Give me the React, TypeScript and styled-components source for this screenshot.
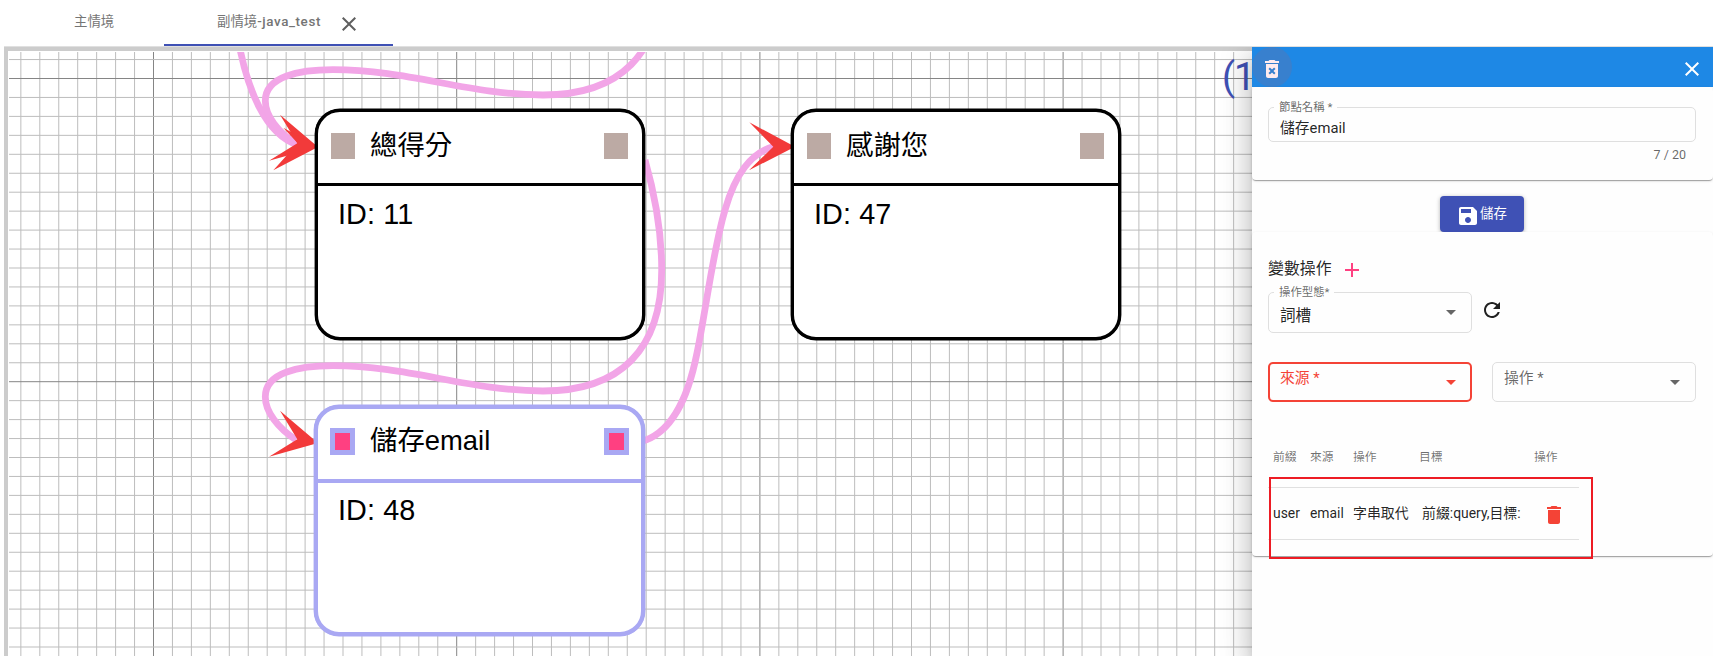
import React from "react";
import styled, { createGlobalStyle } from "styled-components";

const GlobalStyle = createGlobalStyle`
  * { box-sizing: border-box; }
  html, body { margin: 0; padding: 0; background: #fff; }
  body { overflow: hidden; font-family: Roboto, "Noto Sans CJK TC", sans-serif; color: rgba(0, 0, 0, 0.87); }
`;

const Page = styled.div`
  display: flex;
  flex-direction: column;
  height: 656px;
  padding-left: 4px;
`;

const TabBar = styled.nav`
  display: flex;
  flex: 0 0 47px;
  border-bottom: 1px solid #e0e0e0;
`;

const Tab = styled.div<{ $width: number; $indent: number; $active?: boolean }>`
  display: flex;
  align-items: center;
  gap: 16px;
  width: ${(p) => p.$width}px;
  height: 46px;
  padding-left: ${(p) => p.$indent}px;
  border-bottom: 2px solid ${(p) => (p.$active ? "#3f51b5" : "transparent")};
  font-size: 13.4px;
  line-height: 20px;
  white-space: nowrap;
  color: #757575;
  svg { margin-top: 4px; }
`;

const Latin = styled.span`
  font-weight: 500;
  letter-spacing: 0.6px;
`;

const Workspace = styled.main`
  display: flex;
  flex: 1;
  min-height: 0;
  overflow: hidden;
`;

const Canvas = styled.section`
  position: relative;
  flex: 1;
  overflow: hidden;
  padding: 1px 0 0 1px;
  border: solid #ccc;
  border-width: 4px 0 0 4px;
`;

const Drawing = styled.svg`
  display: block;
`;

const NodeBox = styled.article<{ $x: number; $y: number; $selected?: boolean }>`
  --edge: ${(p) => (p.$selected ? "#a9a8f3" : "#000")};
  --line: ${(p) => (p.$selected ? 4 : 3)}px;
  position: absolute;
  left: ${(p) => p.$x}px;
  top: ${(p) => p.$y}px;
  width: ${(p) => (p.$selected ? 331 : 330)}px;
  height: 231px;
  border: var(--line) solid var(--edge);
  border-radius: 25px;
  background: #fff;
  box-shadow: 0 0 0 0.4px var(--edge);
  font-family: "Liberation Sans", "Noto Sans CJK TC", sans-serif;
  color: #000;
`;

const NodeHeader = styled.header<{ $selected?: boolean }>`
  display: flex;
  align-items: flex-start;
  height: 74px;
  padding: ${(p) => (p.$selected ? "19px 12px 0" : "21px 14px 0 13px")};
  border-bottom: var(--line) solid var(--edge);
`;

const Port = styled.i<{ $selected?: boolean }>`
  width: ${(p) => (p.$selected ? 25 : 24)}px;
  height: ${(p) => (p.$selected ? 27 : 26)}px;
  flex: none;
  background: ${(p) => (p.$selected ? "#ff4081" : "#bcaaa4")};
  border: ${(p) => (p.$selected ? "5px solid #a9a8f3" : "none")};
`;

const NodeTitle = styled.h2`
  flex: 1;
  margin: -7px 0 0 15px;
  font-size: 27.4px;
  font-weight: 400;
  line-height: 40px;
  white-space: nowrap;
`;

const NodeId = styled.p<{ $selected?: boolean }>`
  margin: ${(p) => (p.$selected ? 9 : 10)}px 0 0 20px;
  font-size: 28.8px;
  line-height: 36px;
  letter-spacing: 0.1px;
`;

const Panel = styled.aside`
  position: relative;
  display: flex;
  flex-direction: column;
  flex: 0 0 461px;
  background: #fefefe;
  box-shadow: 0 8px 10px -5px rgba(0, 0, 0, 0.2), 0 16px 24px 2px rgba(0, 0, 0, 0.14),
    0 6px 30px 5px rgba(0, 0, 0, 0.12);
`;

const PanelHeader = styled.header`
  display: flex;
  align-items: center;
  justify-content: space-between;
  height: 40px;
  padding-right: 9px;
  background: #1e88e5;
  svg { margin-top: 4px; }
`;

const RoundButton = styled.button`
  display: grid;
  place-items: center;
  width: 40px;
  height: 40px;
  padding: 0;
  border: 0;
  border-radius: 50%;
  background: #3880ce;
`;

const Card = styled.section<{ $height: number; $pad: string }>`
  height: ${(p) => p.$height}px;
  padding: ${(p) => p.$pad};
  border-radius: 4px;
  background: #fefefe;
  box-shadow: 0 2px 1px -1px rgba(0, 0, 0, 0.2), 0 1px 1px 0 rgba(0, 0, 0, 0.14),
    0 1px 3px 0 rgba(0, 0, 0, 0.12);
`;

const Field = styled.fieldset<{ $width: number; $height: number; $error?: boolean }>`
  display: flex;
  align-items: center;
  justify-content: space-between;
  position: relative;
  width: ${(p) => p.$width}px;
  height: ${(p) => p.$height}px;
  margin: 0;
  padding: 0 ${(p) => (p.$error ? 14 : 15)}px 0 ${(p) => (p.$error ? 10 : 11)}px;
  border: ${(p) => (p.$error ? "2px solid #f44336" : "1px solid #dfdfdf")};
  border-radius: 5px;
  color: ${(p) => (p.$error ? "#f44336" : "rgba(0,0,0,.6)")};
`;

const FieldLabel = styled.span`
  position: absolute;
  top: -9px;
  left: 5px;
  padding: 0 5px;
  background: #fefefe;
  font-size: 11.4px;
  line-height: 16px;
  color: rgba(0, 0, 0, 0.6);
  white-space: nowrap;
`;

const FieldValue = styled.span<{ $size: number; $shift: number; $muted?: boolean }>`
  font-size: ${(p) => p.$size}px;
  line-height: 20px;
  margin-top: ${(p) => p.$shift}px;
  color: ${(p) => (p.$muted ? "inherit" : "rgba(0,0,0,.87)")};
`;

const Caret = styled.i<{ $down?: boolean }>`
  width: 0;
  height: 0;
  border: 5px solid transparent;
  border-top-color: currentColor;
  border-bottom: 0;
  margin-top: ${(p) => (p.$down ? 0 : -1)}px;
`;

const Counter = styled.div`
  padding: 6px 10px 0 0;
  font-size: 12.5px;
  line-height: 14px;
  text-align: right;
  color: rgba(0, 0, 0, 0.6);
`;

const SaveRow = styled.div`
  display: flex;
  justify-content: center;
  padding: 16px 1px 0 0;
`;

const SaveButton = styled.button`
  display: flex;
  align-items: center;
  width: 84px;
  height: 36px;
  padding: 0 0 0 16px;
  border: 0;
  border-radius: 4px;
  background: #3f51b5;
  color: #fff;
  font: 400 13.4px/20px Roboto, "Noto Sans CJK TC", sans-serif;
  box-shadow: 0 1px 4px rgba(0, 0, 0, 0.3);
  svg { margin-top: 4px; }
`;

const SectionTitle = styled.h3`
  display: flex;
  align-items: center;
  gap: 8px;
  height: 24px;
  margin: 0 0 10px;
  font-size: 15.9px;
  font-weight: 400;
  span { margin-top: -6px; }
`;

const Row = styled.div<{ $gap: number; $below?: number }>`
  display: flex;
  align-items: flex-start;
  gap: ${(p) => p.$gap}px;
  margin-bottom: ${(p) => p.$below ?? 0}px;
`;

const RefreshIcon = styled.span`
  margin-top: 6px;
  height: 24px;
`;

const OperationTable = styled.div`
  width: 311px;
  margin-top: 36px;
`;

const TableRow = styled.div<{ $head?: boolean }>`
  display: grid;
  grid-template-columns: 37px 43px ${(p) => (p.$head ? "66px 115px" : "69px 112px")} 1fr;
  align-items: center;
  height: ${(p) => (p.$head ? 50 : 52)}px;
  padding: ${(p) => (p.$head ? "0 0 11px 5px" : "0 0 2px 5px")};
  border-bottom: 1px solid #e0e0e0;
  font-size: ${(p) => (p.$head ? 11.8 : 13.9)}px;
  line-height: 20px;
  color: ${(p) => (p.$head ? "rgba(0,0,0,.56)" : "rgba(0,0,0,.87)")};
  white-space: nowrap;
  svg { display: block; margin: 5px 0 0 8px; }
`;

const Highlight = styled.div`
  position: absolute;
  left: 17px;
  top: 430px;
  width: 324px;
  height: 82px;
  border: 2px solid #ed1c24;
`;

const glyphs = {
  close: "M19 6.41L17.59 5 12 10.59 6.41 5 5 6.41 10.59 12 5 17.59 6.41 19 12 13.41 17.59 19 19 17.59 13.41 12z",
  deleteForever:
    "M6 19c0 1.1.9 2 2 2h8c1.1 0 2-.9 2-2V7H6v12zm2.46-7.12l1.41-1.41L12 12.59l2.12-2.12 1.41 1.41L13.41 14l2.12 2.12-1.41 1.41L12 15.41l-2.12 2.12-1.41-1.41L10.59 14l-2.13-2.12zM15.5 4l-1-1h-5l-1 1H5v2h14V4z",
  save: "M17 3H5c-1.11 0-2 .9-2 2v14c0 1.1.89 2 2 2h14c1.1 0 2-.9 2-2V7l-4-4zm-5 16c-1.66 0-3-1.34-3-3s1.34-3 3-3 3 1.34 3 3-1.34 3-3 3zm3-10H5V5h10v4z",
  add: "M19 13h-6v6h-2v-6H5v-2h6V5h2v6h6v2z",
  refresh:
    "M17.65 6.35C16.2 4.9 14.21 4 12 4c-4.42 0-7.99 3.58-7.99 8s3.57 8 7.99 8c3.73 0 6.84-2.55 7.73-6h-2.08c-.82 2.33-3.04 4-5.65 4-3.31 0-6-2.69-6-6s2.69-6 6-6c1.66 0 3.14.69 4.22 1.78L13 11h7V4l-2.35 2.35z",
  delete: "M6 19c0 1.1.9 2 2 2h8c1.1 0 2-.9 2-2V7H6v12zM19 4h-3.5l-1-1h-5l-1 1H5v2h14V4z",
};

function Icon({ name, color }: { name: keyof typeof glyphs; color: string }) {
  return (
    <svg width="24" height="24" viewBox="0 0 24 24" fill={color}>
      <path d={glyphs[name]} />
    </svg>
  );
}

const STEP = 18.95;
const columns = Array.from({ length: 66 }, (_, i) => i - 7);
const rows = Array.from({ length: 32 }, (_, i) => i - 1);
const tone = (i: number) => (i % 16 === 0 ? "#858585" : "#bdbdbd");

const loop =
  "M645 160C655 195 661.7 235 661.7 270C661.7 350 620 391 543 391C470 391 408 365.7 333 365.7C300 365.7 265.3 372 265.3 396.7C265.3 412 278 428 296 440";
const arrow = "M318 443L280 410.7L297.3 439.3L269 456.7Z";

function Diagram() {
  return (
    <Drawing width="1243" height="604" viewBox="9 52 1243 604">
      <g strokeWidth="1">
        {columns.map((i) => (
          <line key={i} x1={153.5 + i * STEP} x2={153.5 + i * STEP} y1="52" y2="656" stroke={tone(i)} />
        ))}
        {rows.map((i) => (
          <line key={i} x1="9" x2="1252" y1={78.5 + i * STEP} y2={78.5 + i * STEP} stroke={tone(i)} />
        ))}
      </g>
      <g fill="none" stroke="#f2a5e7" strokeWidth="6.8">
        <path d="M239 44C247 86 264 134 298 145" />
        <path d={loop} transform="translate(0 -296)" />
        <path d={loop} />
        <path d="M640 442C672 434 688 398 697 353C706 310 713 250 725 210C735 175 750 153 775 146" />
      </g>
      <g fill="#f23a3a">
        <path d={arrow} transform="translate(0 -296)" />
        <path d="M318 147L283.3 127.7L297.7 143.3L273.3 170.3Z" />
        <path d={arrow} />
        <path d="M795 146.7L749.3 122.3L773.3 146.7L749 170.3Z" />
      </g>
      <text x="1222" y="89.5" fill="#3f51b5" fontFamily="Roboto, sans-serif" fontSize="38" letterSpacing="-1">
        (1
      </text>
    </Drawing>
  );
}

type NodeProps = { x: number; y: number; title: string; id: number; selected?: boolean };

function FlowNode({ x, y, title, id, selected }: NodeProps) {
  return (
    <NodeBox $x={x} $y={y} $selected={selected}>
      <NodeHeader $selected={selected}>
        <Port $selected={selected} />
        <NodeTitle>{title}</NodeTitle>
        <Port $selected={selected} />
      </NodeHeader>
      <NodeId $selected={selected}>ID: {id}</NodeId>
    </NodeBox>
  );
}

export default function App() {
  return (
    <>
      <GlobalStyle />
      <Page>
        <TabBar>
          <Tab $width={160} $indent={70}>
            <span>主情境</span>
          </Tab>
          <Tab $width={229} $indent={53} $active>
            <span>
              副情境<Latin>-java_test</Latin>
            </span>
            <Icon name="close" color="#5f5f5f" />
          </Tab>
        </TabBar>
        <Workspace>
          <Canvas>
            <Diagram />
            <FlowNode x={307} y={58} title="總得分" id={11} />
            <FlowNode x={783} y={58} title="感謝您" id={47} />
            <FlowNode x={306} y={354} title="儲存email" id={48} selected />
          </Canvas>
          <Panel>
            <PanelHeader>
              <RoundButton>
                <Icon name="deleteForever" color="#ffebee" />
              </RoundButton>
              <Icon name="close" color="#fff" />
            </PanelHeader>
            <Card $height={93} $pad="20px 17px 0 16px">
              <Field $width={428} $height={35}>
                <FieldLabel>節點名稱 *</FieldLabel>
                <FieldValue $size={14.8} $shift={6}>
                  儲存email
                </FieldValue>
              </Field>
              <Counter>7 / 20</Counter>
            </Card>
            <SaveRow>
              <SaveButton>
                <Icon name="save" color="#fff" />
                <span>儲存</span>
              </SaveButton>
            </SaveRow>
            <Card $height={324} $pad="26px 17px 0 16px">
              <SectionTitle>
                <span>變數操作</span>
                <Icon name="add" color="#ff4081" />
              </SectionTitle>
              <Row $gap={8} $below={29}>
                <Field $width={204} $height={41}>
                  <FieldLabel>操作型態*</FieldLabel>
                  <FieldValue $size={15.6} $shift={6}>
                    詞槽
                  </FieldValue>
                  <Caret />
                </Field>
                <RefreshIcon>
                  <Icon name="refresh" color="#212121" />
                </RefreshIcon>
              </Row>
              <Row $gap={20}>
                <Field $width={204} $height={40} $error>
                  <FieldValue $size={14.8} $shift={-8} $muted>
                    來源 *
                  </FieldValue>
                  <Caret $down />
                </Field>
                <Field $width={204} $height={40}>
                  <FieldValue $size={14.8} $shift={-8} $muted>
                    操作 *
                  </FieldValue>
                  <Caret $down />
                </Field>
              </Row>
              <OperationTable>
                <TableRow $head>
                  <span>前綴</span>
                  <span>來源</span>
                  <span>操作</span>
                  <span>目標</span>
                  <span>操作</span>
                </TableRow>
                <TableRow>
                  <span>user</span>
                  <span>email</span>
                  <span>字串取代</span>
                  <span>前綴:query,目標:</span>
                  <Icon name="delete" color="#f44336" />
                </TableRow>
              </OperationTable>
            </Card>
            <Highlight />
          </Panel>
        </Workspace>
      </Page>
    </>
  );
}
